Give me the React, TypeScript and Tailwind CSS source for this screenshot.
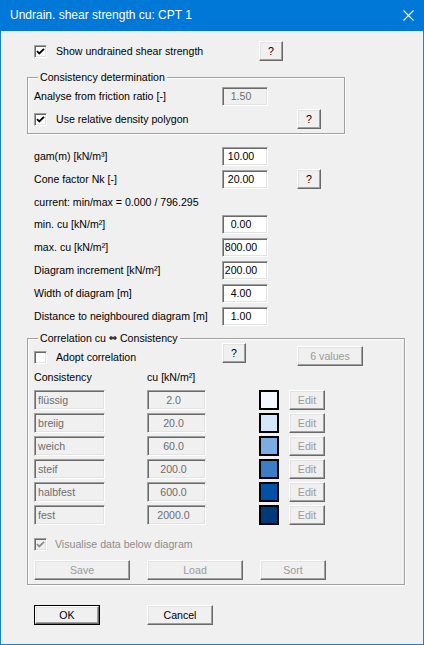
import React from "react";

type Row = { name: string; cu: string; color: string };

const rows: Row[] = [
  { name: "flüssig", cu: "2.0", color: "bg-[#f3f8fe]" },
  { name: "breiig", cu: "20.0", color: "bg-[#d5e7fa]" },
  { name: "weich", cu: "60.0", color: "bg-[#7bade2]" },
  { name: "steif", cu: "200.0", color: "bg-[#3b7ec6]" },
  { name: "halbfest", cu: "600.0", color: "bg-[#0052a8]" },
  { name: "fest", cu: "2000.0", color: "bg-[#003a78]" },
];

const fields = [
  { label: "min. cu [kN/m²]", value: "0.00" },
  { label: "max. cu [kN/m²]", value: "800.00" },
  { label: "Diagram increment [kN/m²]", value: "200.00" },
  { label: "Width of diagram [m]", value: "4.00" },
  { label: "Distance to neighboured diagram [m]", value: "1.00" },
];

const sunken =
  "border border-t-[#a0a0a0] border-l-[#a0a0a0] border-r-white border-b-white shadow-[inset_1px_1px_0_#696969,inset_-1px_-1px_0_#e3e3e3]";
const raised =
  "border border-t-white border-l-white border-r-[#696969] border-b-[#696969] shadow-[inset_-1px_-1px_0_#a0a0a0,inset_1px_1px_0_#e3e3e3] bg-[#f0f0f0]";

function Check({ checked, disabled }: { checked?: boolean; disabled?: boolean }) {
  return (
    <span
      className={`w-[13px] h-[13px] shrink-0 flex items-center justify-center ${sunken} ${
        disabled ? "bg-[#f0f0f0]" : "bg-white"
      }`}
    >
      {checked && (
        <svg width="9" height="9" viewBox="0 0 9 9">
          <path
            d="M1 4.2 L3.3 6.5 L8 1.8"
            fill="none"
            stroke={disabled ? "#8d8d8d" : "#000"}
            strokeWidth="1.8"
          />
        </svg>
      )}
    </span>
  );
}

function Btn({
  children,
  w,
  disabled,
}: {
  children: React.ReactNode;
  w: string;
  disabled?: boolean;
}) {
  return (
    <div
      className={`${w} h-[20px] shrink-0 flex items-center justify-center ${raised} ${
        disabled ? "text-[#9a9a9a]" : "text-black"
      }`}
    >
      {children}
    </div>
  );
}

function Field({ value, disabled }: { value: string; disabled?: boolean }) {
  return (
    <div
      className={`w-[46px] h-[19px] shrink-0 flex items-center justify-center pr-[8px] ${sunken} ${
        disabled ? "bg-[#f0f0f0] text-[#6d6d6d]" : "bg-white text-black"
      }`}
    >
      {value}
    </div>
  );
}

function Group({
  title,
  w,
  children,
}: {
  title: React.ReactNode;
  w: string;
  children: React.ReactNode;
}) {
  return (
    <div
      className={`relative ml-[26px] ${w} border border-[#a0a0a0] shadow-[inset_1px_1px_0_#fff,1px_1px_0_#fff] pl-[6px]`}
    >
      <span className="absolute left-[10px] -top-[8px] h-[14px] leading-[14px] px-[2px] bg-[#f0f0f0]">
        {title}
      </span>
      {children}
    </div>
  );
}

export default function App() {
  return (
    <div className="w-[424px] h-[645px] flex flex-col bg-[#f0f0f0] text-[10.6px] leading-[13px] text-black font-['Liberation_Sans',Arial,sans-serif] overflow-hidden">
      {/* Title bar */}
      <div className="h-[31px] shrink-0 bg-[#0078d7] flex items-center justify-between pl-[10px] pr-[10px]">
        <span className="text-white text-[12px] font-['Liberation_Sans',Arial,sans-serif]">
          Undrain. shear strength cu: CPT 1
        </span>
        <svg width="11" height="11" viewBox="0 0 11 11">
          <path d="M0.5 0.5 L10.5 10.5 M10.5 0.5 L0.5 10.5" stroke="#fff" strokeWidth="1.1" />
        </svg>
      </div>

      {/* Body */}
      <div className="flex-1 flex flex-col border-x border-b border-[#1883d7]">
        {/* Show undrained */}
        <div className="mt-[10px] h-[20px] pl-[33px] flex items-center">
          <div className="w-[225px] flex items-center gap-[9px]">
            <Check checked />
            <span>Show undrained shear strength</span>
          </div>
          <Btn w="w-[24px]">?</Btn>
        </div>

        {/* Consistency determination */}
        <div className="mt-[16px]">
          <Group title="Consistency determination" w="w-[318px]">
            <div className="pt-[9px] h-[28px] flex items-center">
              <span className="w-[188px]">Analyse from friction ratio [-]</span>
              <Field value="1.50" disabled />
            </div>
            <div className="mt-[3px] h-[20px] flex items-center">
              <div className="w-[263px] flex items-center gap-[9px]">
                <Check checked />
                <span>Use relative density polygon</span>
              </div>
              <Btn w="w-[24px]">?</Btn>
            </div>
            <div className="h-[4px]" />
          </Group>
        </div>

        {/* gam / cone */}
        <div className="mt-[13px] pl-[33px] h-[19px] flex items-center">
          <span className="w-[188px]">gam(m) [kN/m³]</span>
          <Field value="10.00" />
        </div>
        <div className="mt-[3px] pl-[33px] h-[20px] flex items-center">
          <span className="w-[188px]">Cone factor Nk [-]</span>
          <Field value="20.00" />
          <span className="w-[29px]" />
          <Btn w="w-[24px]">?</Btn>
        </div>
        <div className="mt-[4px] pl-[33px] h-[18px] flex items-center">
          current: min/max = 0.000 / 796.295
        </div>

        {fields.map((f) => (
          <div key={f.label} className="mt-[4px] pl-[33px] h-[19px] flex items-center">
            <span className="w-[188px]">{f.label}</span>
            <Field value={f.value} />
          </div>
        ))}

        {/* Correlation */}
        <div className="mt-[12px]">
          <Group
            w="w-[378px]"
            title={
              <span className="flex items-center gap-[2px]">
                Correlation cu
                <svg width="8" height="6" viewBox="0 0 8 6" className="mx-[1px]">
                  <path d="M0.5 3 L2.5 1 M0.5 3 L2.5 5 M7.5 3 L5.5 1 M7.5 3 L5.5 5 M1 2.3 H7 M1 3.7 H7" stroke="#000" strokeWidth="0.9" fill="none" />
                </svg>
                Consistency
              </span>
            }
          >
            <div className="pt-[4px] h-[25px] flex items-start">
              <div className="w-[188px] mt-[8px] flex items-center gap-[9px]">
                <Check />
                <span>Adopt correlation</span>
              </div>
              <Btn w="w-[24px]">?</Btn>
              <span className="w-[51px]" />
              <div className="mt-[3px]">
                <Btn w="w-[66px]" disabled>
                  6 values
                </Btn>
              </div>
            </div>
            <div className="mt-[6px] h-[14px] flex items-center">
              <span className="w-[113px]">Consistency</span>
              <span>cu [kN/m²]</span>
            </div>
            <div className="mt-[6px] flex flex-col gap-[3px]">
              {rows.map((r) => (
                <div key={r.name} className="h-[20px] flex items-center">
                  <div className={`w-[71px] h-[20px] pl-[3px] flex items-center bg-[#f0f0f0] text-[#6d6d6d] ${sunken}`}>
                    {r.name}
                  </div>
                  <span className="w-[42px]" />
                  <div className={`w-[59px] h-[20px] pr-[6px] flex items-center justify-center bg-[#f0f0f0] text-[#6d6d6d] ${sunken}`}>
                    {r.cu}
                  </div>
                  <span className="w-[53px]" />
                  <div className={`w-[20px] h-[20px] border-2 border-black ${r.color}`} />
                  <span className="w-[10px]" />
                  <Btn w="w-[36px]" disabled>
                    Edit
                  </Btn>
                </div>
              ))}
            </div>
            <div className="mt-[13px] h-[13px] flex items-center gap-[8px] text-[#8d8d8d]">
              <Check checked disabled />
              <span>Visualise data below diagram</span>
            </div>
            <div className="mt-[9px] h-[20px] flex items-center">
              <Btn w="w-[96px]" disabled>
                Save
              </Btn>
              <span className="w-[17px]" />
              <Btn w="w-[96px]" disabled>
                Load
              </Btn>
              <span className="w-[17px]" />
              <Btn w="w-[66px]" disabled>
                Sort
              </Btn>
            </div>
            <div className="h-[4px]" />
          </Group>
        </div>

        {/* OK / Cancel */}
        <div className="mt-[20px] pl-[33px] h-[20px] flex items-center">
          <div className="w-[66px] h-[20px] border border-black flex">
            <div className={`flex-1 flex items-center justify-center ${raised}`}>OK</div>
          </div>
          <span className="w-[47px]" />
          <Btn w="w-[66px]">Cancel</Btn>
        </div>
      </div>
    </div>
  );
}
